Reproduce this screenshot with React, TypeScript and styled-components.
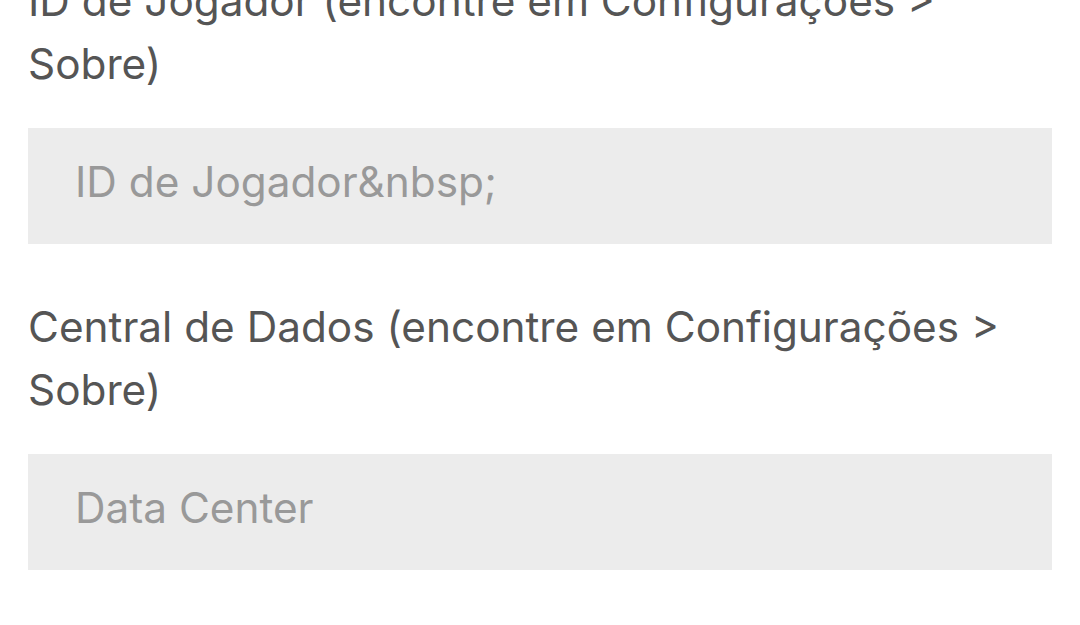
import { FunctionComponent } from "react";
import styled, { createGlobalStyle } from "styled-components";

const GlobalStyle = createGlobalStyle`
  html, body {
    margin: 0;
    padding: 0;
    background: #ffffff;
    overflow: hidden;
  }
  body {
    font-family: Inter, "Noto Sans", sans-serif;
  }
`;

const Form = styled.form`
  box-sizing: border-box;
  display: flex;
  flex-direction: column;
  padding: 0 28px;
  margin-top: -31px;
`;

const Field = styled.div`
  display: flex;
  flex-direction: column;
  gap: 33px;
  margin-bottom: 51px;
`;

const Label = styled.label`
  font-size: 42.3px;
  line-height: 63px;
  color: #555555;
  padding-right: 40px;
`;

const Input = styled.input`
  box-sizing: border-box;
  width: 100%;
  height: 116px;
  border: none;
  outline: none;
  border-radius: 0;
  background: #ececec;
  padding: 0 47px 10px;
  font-family: inherit;
  font-size: 42.3px;
  color: #333333;

  &::placeholder {
    color: #999999;
  }
`;

type FieldProps = {
  id: string;
  label: string;
  placeholder: string;
};

const TextField: FunctionComponent<FieldProps> = ({ id, label, placeholder }) => (
  <Field>
    <Label htmlFor={id}>{label}</Label>
    <Input id={id} type="text" placeholder={placeholder} />
  </Field>
);

const App: FunctionComponent = () => {
  return (
    <>
      <GlobalStyle />
      <Form onSubmit={(e) => e.preventDefault()}>
        <TextField
          id="player-id"
          label="ID de Jogador (encontre em Configurações > Sobre)"
          placeholder={"ID de Jogador&nbsp;"}
        />
        <TextField
          id="data-center"
          label="Central de Dados (encontre em Configurações > Sobre)"
          placeholder="Data Center"
        />
      </Form>
    </>
  );
};

export default App;
